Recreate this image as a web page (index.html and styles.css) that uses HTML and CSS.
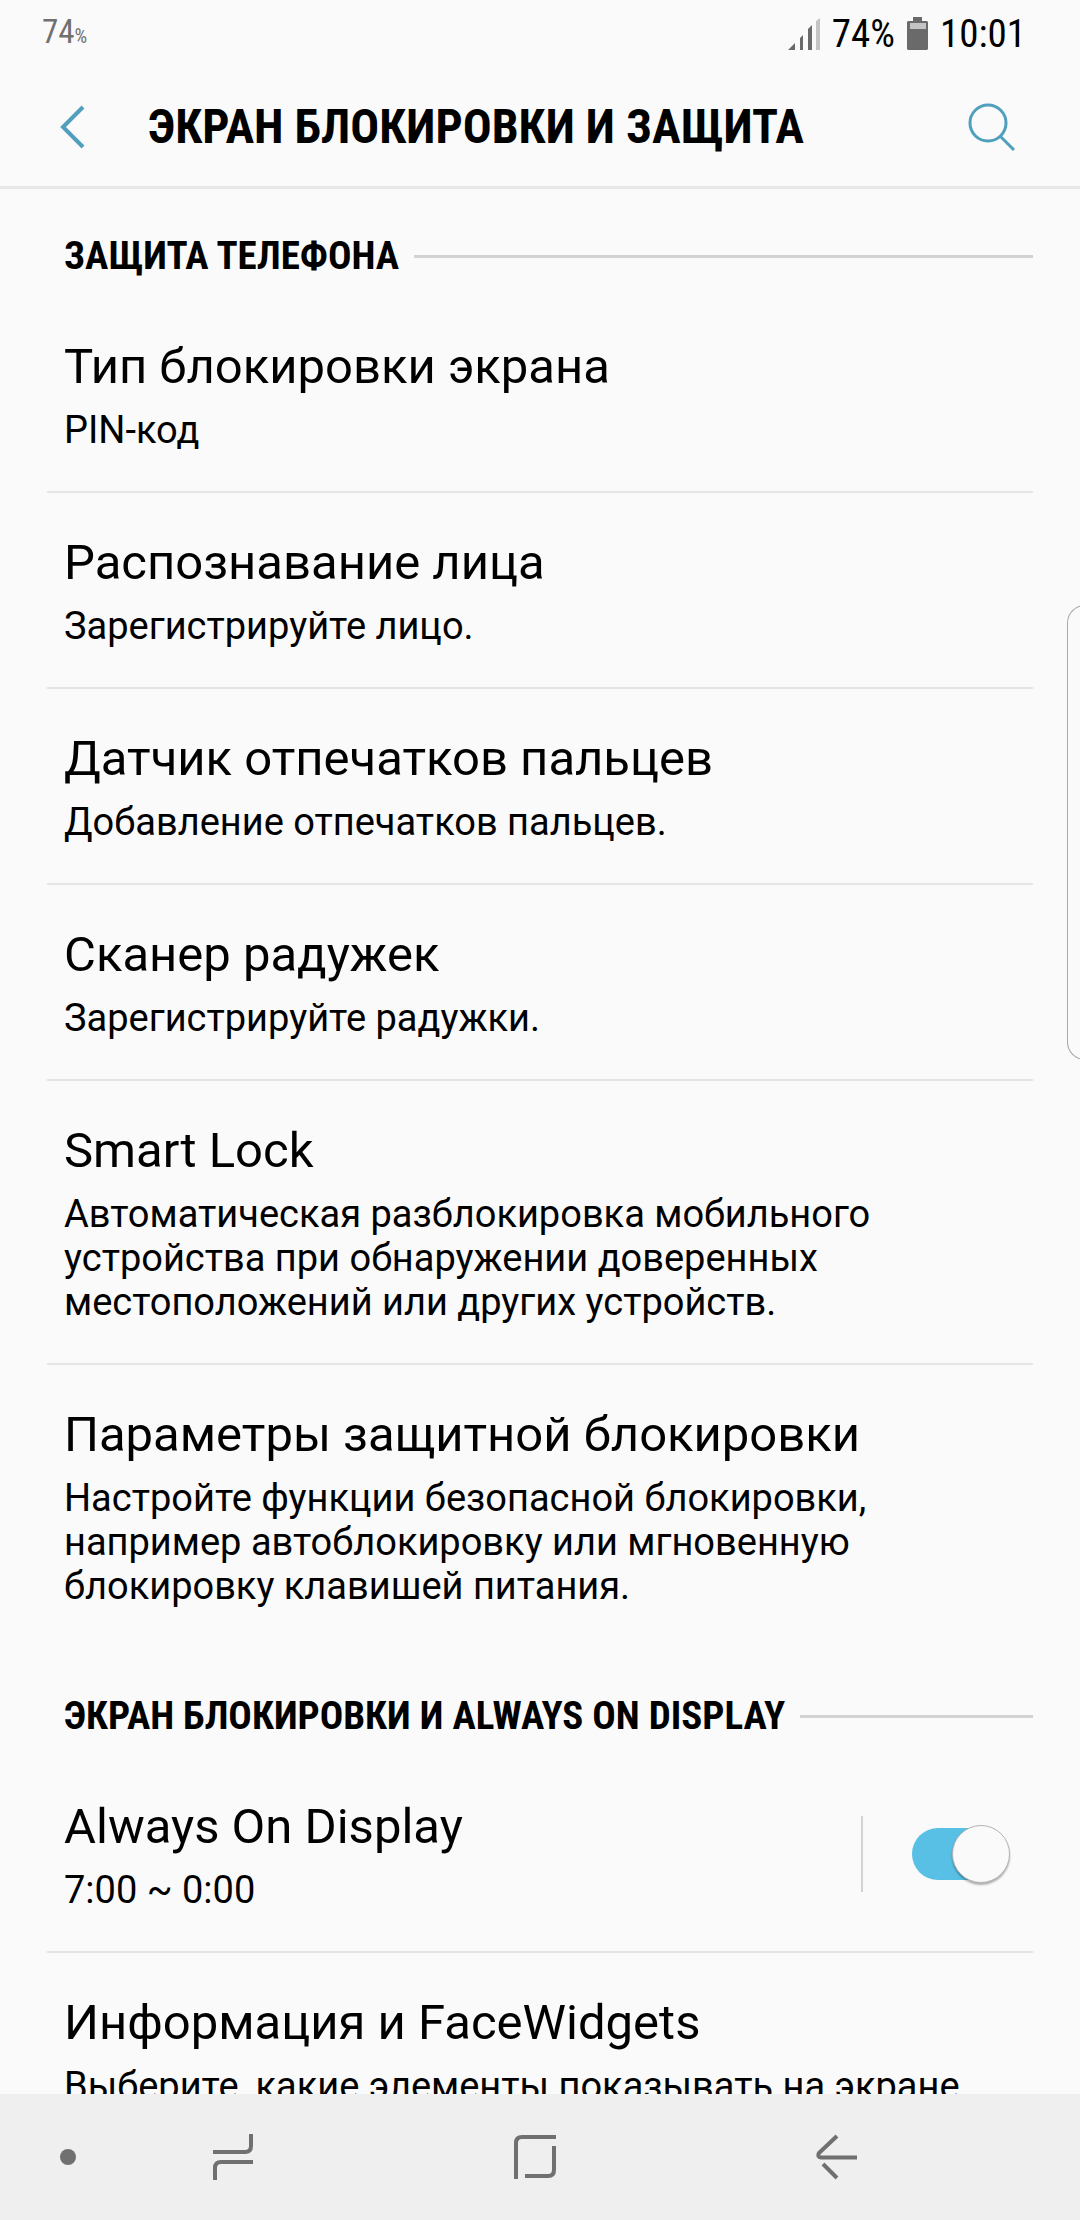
FILE: index.html
```html
<!DOCTYPE html>
<html lang="ru">
<head>
<meta charset="utf-8">
<meta name="viewport" content="width=device-width, initial-scale=1">
<title>Экран блокировки и защита</title>
<link rel="stylesheet" href="styles.css">
</head>
<body>
<div class="screen">
  <div class="status">
    <span class="status-note">74<small>%</small></span>
    <div class="status-right">
      <svg class="signal" width="32" height="32" viewBox="0 0 32 32" aria-hidden="true">
        <path d="M0 32L7 25V32Z M12 20L15 17V32H12Z M20 11L24 7V32H20Z" fill="#6a6a6a"/>
        <path d="M28 3L32 0V32H28Z" fill="#c4c4c4"/>
      </svg>
      <span>74%</span>
      <svg class="battery" width="21" height="33" viewBox="0 0 21 33" aria-hidden="true">
        <path d="M6 0H15V4H20L21 5V32L20 33H1L0 32V5L1 4H6Z" fill="#6a6a6a"/>
        <path d="M3 6H19V12H3Z" fill="#c4c4c4"/>
      </svg>
      <time>10:01</time>
    </div>
  </div>

  <header class="header">
    <button class="icon-button" type="button" aria-label="Назад">
      <svg width="26" height="44" viewBox="0 0 26 44" aria-hidden="true"><path d="M24 2L4 22L24 42" fill="none" stroke="#4f9fbd" stroke-width="4"/></svg>
    </button>
    <h1>ЭКРАН БЛОКИРОВКИ И ЗАЩИТА</h1>
    <button class="icon-button" type="button" aria-label="Поиск">
      <svg width="48" height="48" viewBox="0 0 48 48" aria-hidden="true"><g fill="none" stroke="#4f9fbd" stroke-width="3"><circle cx="20" cy="20" r="18"/><path d="M32 33L46 47"/></g></svg>
    </button>
  </header>

  <main class="content">
    <section>
      <h2>ЗАЩИТА ТЕЛЕФОНА</h2>
      <ul class="list">
        <li class="row"><a href="#lock-type"><span class="title">Тип блокировки экрана</span><span class="note">PIN-код</span></a></li>
        <li class="row"><a href="#face"><span class="title">Распознавание лица</span><span class="note">Зарегистрируйте лицо.</span></a></li>
        <li class="row"><a href="#fingerprint"><span class="title">Датчик отпечатков пальцев</span><span class="note">Добавление отпечатков пальцев.</span></a></li>
        <li class="row"><a href="#iris"><span class="title">Сканер радужек</span><span class="note">Зарегистрируйте радужки.</span></a></li>
        <li class="row"><a href="#smart-lock"><span class="title">Smart Lock</span><span class="note">Автоматическая разблокировка мобильного устройства при обнаружении доверенных местоположений или других устройств.</span></a></li>
        <li class="row"><a href="#secure-lock"><span class="title">Параметры защитной блокировки</span><span class="note">Настройте функции безопасной блокировки, например автоблокировку или мгновенную блокировку клавишей питания.</span></a></li>
      </ul>
    </section>
    <section>
      <h2>ЭКРАН БЛОКИРОВКИ И ALWAYS ON DISPLAY</h2>
      <ul class="list">
        <li class="row">
          <a href="#aod"><span class="title" id="aod-title">Always On Display</span><span class="note">7:00 ~ 0:00</span></a>
          <div class="toggle-cell"><input class="toggle" type="checkbox" role="switch" aria-labelledby="aod-title" checked></div>
        </li>
        <li class="row"><a href="#facewidgets"><span class="title">Информация и FaceWidgets</span><span class="note">Выберите, какие элементы показывать на экране</span></a></li>
      </ul>
    </section>
  </main>

  <nav class="navbar">
    <button class="nav-dot" type="button" aria-label="Скрыть панель"></button>
    <button class="nav-button" type="button" aria-label="Последние">
      <svg width="42" height="46" viewBox="0 0 42 46" aria-hidden="true"><path d="M1 18H33Q39 18 39 12V0 M3 46V34Q3 28 9 28H41" fill="none" stroke="#707070" stroke-width="4"/></svg>
    </button>
    <button class="nav-button" type="button" aria-label="Главный экран">
      <svg width="42" height="44" viewBox="0 0 42 44" aria-hidden="true"><path d="M2 44V8Q2 2 8 2H42 M40 11V35Q40 41 34 41H11" fill="none" stroke="#707070" stroke-width="4"/></svg>
    </button>
    <button class="nav-button" type="button" aria-label="Назад">
      <svg width="42" height="46" viewBox="0 0 42 46" aria-hidden="true"><path d="M21 2L3 19Q1 23 5 23.500H41 M7 30L21 44" fill="none" stroke="#707070" stroke-width="4"/></svg>
    </button>
  </nav>
  <div class="edge-handle"></div>
</div>
</body>
</html>
```
FILE: styles.css
```css
* { box-sizing: border-box; }

body {
  margin: 0;
  background: #fafafa;
  color: #000;
  font-family: Roboto, "Noto Sans", sans-serif;
}

button {
  padding: 0;
  border: 0;
  background: none;
}

svg { display: block; }

.screen {
  position: relative;
  display: flex;
  flex-direction: column;
  height: 100vh;
  overflow: hidden;
}

.status,
.header,
h2 {
  font-family: "Roboto Condensed", Roboto, "Noto Sans", sans-serif;
}

.status {
  flex: none;
  display: flex;
  justify-content: space-between;
  align-items: center;
  height: 67px;
  padding: 0 54px 0 42px;
  font-size: 39px;
  line-height: 48px;
}

.status-note {
  color: #707070;
  font-size: 33px;
}

.status-note small { font-size: 20px; }

.status-right {
  display: flex;
  align-items: center;
  gap: 12px;
}

.header {
  flex: none;
  display: flex;
  align-items: center;
  height: 122px;
  padding: 0 46px 0 30px;
  border-bottom: 3px solid #e7e7e7;
}

.header h1 {
  flex: 1;
  margin: 0;
  padding-left: 34px;
  font-size: 48px;
  line-height: 60px;
  font-weight: 700;
  white-space: nowrap;
}

.icon-button {
  display: grid;
  place-items: center;
  width: 84px;
  height: 84px;
}

.content {
  flex: 1;
  min-height: 0;
  padding: 0 47px;
  overflow: hidden;
}

h2 {
  display: flex;
  align-items: center;
  gap: 15px;
  margin: 0;
  padding: 44px 0 18px 17px;
  font-size: 39px;
  line-height: 46px;
  font-weight: 700;
  white-space: nowrap;
}

h2::after {
  content: "";
  flex: 1;
  height: 3px;
  background: #d3d3d3;
}

.list {
  margin: 0;
  padding: 0;
  list-style: none;
}

.row {
  display: flex;
  align-items: center;
  border-bottom: 2px solid #e5e5e5;
}

.row:last-child { border-bottom-color: transparent; }

.row a {
  flex: 1;
  display: flex;
  flex-direction: column;
  gap: 11px;
  padding: 40px 17px 39px;
  color: inherit;
  text-decoration: none;
}

.title {
  font-size: 49px;
  line-height: 60px;
}

.note {
  font-size: 38px;
  line-height: 44px;
}

.toggle-cell {
  display: flex;
  align-items: center;
  height: 76px;
  padding: 0 23px 0 49px;
  border-left: 2px solid #d3d3d3;
}

.toggle {
  appearance: none;
  display: flex;
  align-items: center;
  width: 98px;
  height: 52px;
  margin: 0;
  border-radius: 26px;
  background: linear-gradient(90deg, #57c0e4 70px, transparent 70px);
}

.toggle::before {
  content: "";
  flex: none;
  width: 56px;
  height: 56px;
  margin-left: auto;
  border: 1px solid #b5b5b5;
  border-radius: 50%;
  background: #fafafa;
  box-shadow: 0 2px 2px rgba(0, 0, 0, 0.3);
}

.toggle:not(:checked) { background: #c4c4c4; }
.toggle:not(:checked)::before { margin-left: 0; }

.navbar {
  flex: none;
  display: flex;
  align-items: center;
  height: 126px;
  padding: 0 92px 0 54px;
  background: #efefef;
}

.nav-dot {
  display: grid;
  place-items: center;
  width: 28px;
  height: 100%;
}

.nav-dot::before {
  content: "";
  width: 16px;
  height: 16px;
  border-radius: 50%;
  background: #707070;
}

.nav-button {
  flex: 1;
  display: grid;
  place-items: center;
  height: 100%;
}

/* Edge panel handle lying over the list */
.edge-handle {
  position: absolute;
  top: 605px;
  right: -8px;
  width: 21px;
  height: 455px;
  border: 1px solid #a8a8a8;
  border-right: 0;
  border-radius: 18px 0 0 18px;
}
```
